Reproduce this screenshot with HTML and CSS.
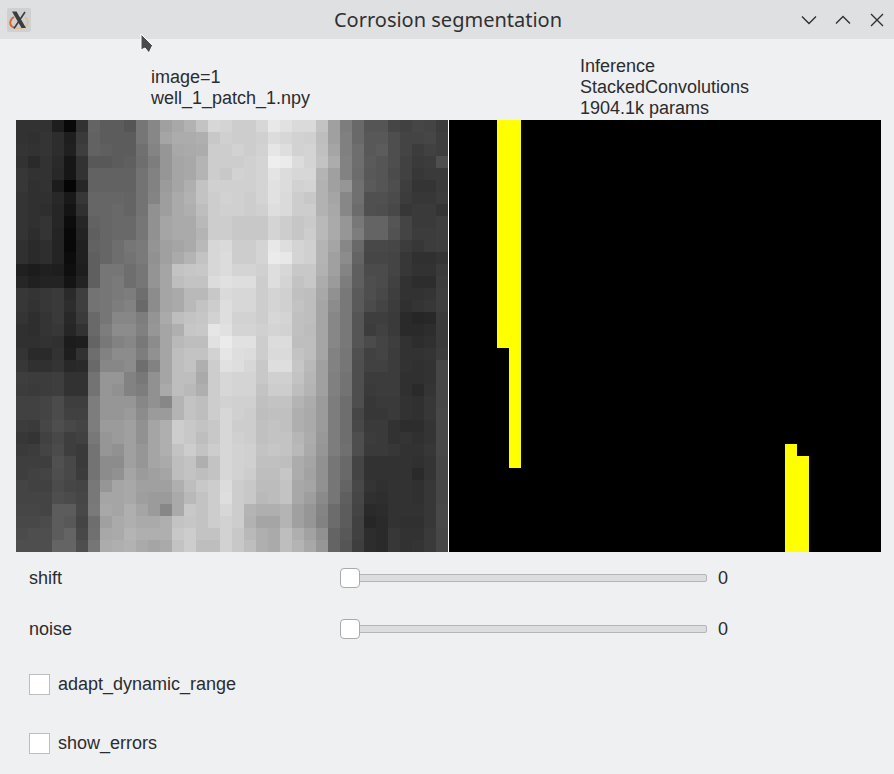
FILE: index.html
```html
<!DOCTYPE html>
<html lang="en">
<head>
    <meta charset="UTF-8">
    <meta name="viewport" content="width=device-width, initial-scale=1.0">
    <title>Corrosion segmentation</title>
    <link rel="stylesheet" href="styles.css">
</head>
<body>
    <div class="window">
        <div class="titlebar">
            <svg class="app-icon" viewBox="0 0 24 24" width="24" height="24">
                <rect width="24" height="24" rx="2" fill="#cfd0d2"/>
                <path d="M7 9 C2 12 2 18 7 19.5" fill="none" stroke="#e0662a" stroke-width="2"/>
                <path d="M18 9 C22 12 22 17 17 19.5 C14 20.5 11 20.5 9 20" fill="none" stroke="#e8b98a" stroke-width="1.3"/>
                <path d="M5 3.5 H9.5 L19 20 H14.5 Z" fill="#3c3c3e"/>
                <path d="M18 4 L7 20.5" fill="none" stroke="#3c3c3e" stroke-width="1.6"/>
            </svg>
            <div class="title">Corrosion segmentation</div>
            <div class="window-buttons">
                <svg viewBox="0 0 16 10" width="16" height="10"><path d="M1 1.5 L8 8.5 L15 1.5" class="glyph"/></svg>
                <svg viewBox="0 0 16 10" width="16" height="10"><path d="M1 8.5 L8 1.5 L15 8.5" class="glyph"/></svg>
                <svg class="close" viewBox="0 0 14 14" width="14" height="14"><path d="M1 1 L13 13 M13 1 L1 13" class="glyph"/></svg>
            </div>
        </div>

        <div class="content">
            <div class="captions">
                <div class="caption caption-left">image=1<br>well_1_patch_1.npy</div>
                <div class="caption caption-right">Inference<br>StackedConvolutions<br>1904.1k params</div>
            </div>
            <div class="plots">
                <canvas id="inputImage" class="plot" width="36" height="36"></canvas>
                <canvas id="inference" class="plot" width="36" height="36"></canvas>
            </div>
            <div class="controls">
                <div class="control">
                    <span class="control-label">shift</span>
                    <div class="slider"><div class="track"></div><div class="thumb"></div></div>
                    <span class="control-value">0</span>
                </div>
                <div class="control">
                    <span class="control-label">noise</span>
                    <div class="slider"><div class="track"></div><div class="thumb"></div></div>
                    <span class="control-value">0</span>
                </div>
                <label class="check">
                    <span class="box"></span>
                    adapt_dynamic_range
                </label>
                <label class="check">
                    <span class="box"></span>
                    show_errors
                </label>
            </div>
        </div>

        <svg class="pointer" viewBox="0 0 14 21" width="14" height="21">
            <path d="M1 1 V17 L5 15 L9 20 L12.5 12.5 Z" fill="#4a4b4d" stroke="#ffffff" stroke-width="1"/>
        </svg>
    </div>
    <script src="app.js"></script>
</body>
</html>
```

FILE: styles.css
```css
* {
    box-sizing: border-box;
}
html, body {
    margin: 0;
    padding: 0;
}
body {
    font-family: "Liberation Sans", Arial, sans-serif;
    font-size: 18px;
    color: #2b2c2e;
    background-color: #eff0f2;
}
.window {
    position: relative;
    width: 894px;
    height: 774px;
    overflow: hidden;
}
.titlebar {
    display: flex;
    align-items: center;
    height: 39px;
    padding: 0 10px 0 7px;
    background-color: #dfe0e2;
}
.app-icon {
    flex: none;
}
.title {
    flex: 1;
    padding-left: 64px;
    text-align: center;
    font-family: "Noto Sans", sans-serif;
    font-size: 20px;
    color: #2f3032;
}
.window-buttons {
    display: flex;
    align-items: center;
    gap: 18px;
}
.close {
    margin-left: 1px;
}
.glyph {
    fill: none;
    stroke: #2f3032;
    stroke-width: 1.4;
}
.content {
    padding: 0 13px 0 16px;
}
.captions {
    display: grid;
    grid-template-columns: 433px 432px;
    height: 81px;
}
.caption {
    align-self: end;
    padding-bottom: 1px;
    line-height: 21px;
}
.caption-left {
    padding-left: 135px;
    padding-bottom: 11px;
}
.caption-right {
    padding-left: 131px;
}
.plots {
    display: flex;
    gap: 1px;
    background-color: #ffffff;
    width: 865px;
}
.plot {
    display: block;
    width: 432px;
    height: 432px;
    image-rendering: pixelated;
}
.controls {
    display: grid;
    grid-template-rows: 52px 50px 60px 58px;
    padding-left: 13px;
}
.control {
    display: flex;
    align-items: center;
}
.control-label {
    width: 311px;
}
.slider {
    position: relative;
    width: 367px;
    height: 20px;
}
.track {
    position: absolute;
    left: 9px;
    right: 0;
    top: 6px;
    height: 8px;
    background-color: #dcdddf;
    border: 1px solid #b4b5b7;
    border-radius: 2px;
}
.thumb {
    position: absolute;
    left: 0;
    top: 0;
    width: 20px;
    height: 20px;
    background-color: #ffffff;
    border: 1px solid #a9aaac;
    border-radius: 4px;
}
.control-value {
    margin-left: 11px;
}
.check {
    display: flex;
    align-items: center;
    gap: 8px;
}
.box {
    width: 21px;
    height: 21px;
    background-color: #ffffff;
    border: 1px solid #bdbec0;
}
.pointer {
    position: absolute;
    left: 140px;
    top: 33px;
}
```

FILE: app.js
```js
// grey levels of the input patch, 36 x 36
const patch = [
    [50,50,50,30,8,50,100,92,92,85,118,135,160,168,178,195,215,212,205,205,215,232,225,218,218,195,160,125,105,85,85,70,65,70,68,60],
    [50,48,52,45,30,58,98,92,92,92,118,135,165,172,172,175,200,208,205,205,208,220,215,210,208,190,160,128,105,88,88,78,68,68,70,62],
    [52,50,52,45,32,62,98,95,92,92,112,132,150,168,170,172,205,205,210,205,210,230,222,210,212,192,165,128,110,88,92,78,68,60,65,62],
    [50,42,50,42,22,50,88,88,92,95,110,125,150,165,168,180,205,205,205,208,212,238,235,220,212,195,172,130,110,90,85,78,65,58,60,78],
    [55,50,50,40,22,50,98,98,98,98,115,130,150,165,168,180,205,200,210,208,212,228,220,215,215,180,160,130,108,88,85,75,65,55,58,58],
    [55,48,50,28,5,38,98,98,98,98,115,130,155,165,175,195,208,208,208,208,212,225,220,210,212,178,160,150,112,90,85,78,62,52,52,58],
    [52,48,48,40,25,55,102,102,102,100,115,132,158,170,178,195,205,210,208,205,212,225,218,205,200,178,165,135,112,80,80,75,60,55,55,60],
    [52,48,46,38,20,48,102,102,105,100,115,145,158,170,175,190,205,208,208,205,208,222,218,205,205,178,168,135,108,80,78,72,55,58,58,52],
    [52,48,52,38,12,38,98,102,105,105,118,145,165,170,170,185,205,205,200,200,200,212,205,198,202,185,170,150,120,100,100,85,68,58,58,62],
    [52,45,52,36,8,35,95,102,105,105,118,145,165,170,170,180,205,205,200,200,200,212,205,198,205,185,170,150,125,100,100,82,68,60,60,62],
    [48,42,46,36,8,32,98,102,110,118,122,148,160,165,170,185,215,218,205,205,212,232,222,212,208,180,165,135,105,72,72,70,60,55,60,62],
    [48,42,46,36,12,32,95,102,110,115,122,145,160,170,180,195,215,220,205,205,212,235,232,212,208,180,160,140,100,70,70,68,55,48,48,52],
    [32,28,32,30,15,30,95,118,118,110,118,148,165,195,198,200,215,220,212,212,208,222,215,200,200,178,160,132,95,75,75,68,55,50,50,58],
    [38,32,35,35,20,35,95,118,122,110,118,148,165,190,195,195,220,225,222,222,205,222,212,195,200,172,155,125,95,78,75,65,50,45,45,60],
    [55,52,55,58,42,62,115,118,122,125,110,140,165,170,185,185,200,218,215,215,205,212,208,192,190,168,145,120,90,78,72,62,50,50,52,62],
    [55,50,55,58,45,62,115,118,125,130,105,140,165,170,185,195,205,222,215,215,205,212,208,195,190,165,140,120,90,75,68,60,48,52,55,62],
    [52,46,52,58,40,58,105,118,135,135,125,148,170,190,195,198,210,222,210,210,205,215,212,192,190,165,135,120,85,62,62,58,42,38,40,58],
    [48,46,52,55,38,50,105,125,140,140,128,150,165,175,198,200,230,225,212,212,208,212,210,192,188,165,135,120,85,60,65,58,42,42,45,58],
    [48,48,50,48,28,30,100,120,130,135,120,140,165,185,190,190,225,235,225,225,205,220,220,190,190,165,135,120,85,75,68,62,50,45,48,58],
    [52,42,42,50,30,50,110,130,140,140,125,145,165,190,195,195,210,230,222,220,205,218,218,195,190,165,130,118,80,65,68,60,50,50,52,60],
    [55,48,48,52,40,42,105,135,135,140,110,130,165,190,195,175,205,225,222,215,200,222,222,198,185,160,130,118,78,65,65,60,50,48,50,70],
    [62,60,60,62,50,50,115,150,150,130,120,145,165,190,190,170,205,215,212,212,200,208,208,195,182,160,128,115,78,60,60,60,48,48,50,70],
    [60,58,60,62,50,50,115,150,145,130,125,145,170,190,185,175,205,215,212,212,195,205,205,190,180,160,128,115,78,58,60,60,48,42,52,70],
    [65,65,68,75,62,62,125,150,150,150,135,145,135,180,195,190,205,210,208,208,192,195,195,180,172,155,125,110,78,55,58,58,50,48,55,70],
    [65,65,68,75,65,65,125,150,150,155,140,155,155,180,195,190,205,215,208,205,190,192,192,175,170,155,125,110,70,55,55,58,50,48,55,72],
    [60,58,70,78,72,68,125,155,155,160,145,165,175,205,200,195,200,215,205,205,192,195,192,175,170,155,125,110,72,58,58,50,45,45,52,72],
    [55,52,65,72,62,65,120,150,155,160,145,165,175,205,200,190,200,215,208,205,192,195,195,182,172,152,125,110,78,60,58,50,52,48,52,72],
    [58,60,68,75,62,58,115,150,145,160,150,165,175,195,205,195,205,215,210,208,195,198,195,185,170,150,125,112,78,58,58,55,50,50,55,72],
    [62,62,62,80,72,58,115,140,140,160,150,165,170,190,195,175,195,215,210,208,192,192,190,172,165,145,118,105,68,50,50,50,50,48,52,70],
    [62,65,68,78,72,60,115,140,145,165,155,160,165,190,195,190,195,215,210,205,190,190,198,172,162,145,118,105,68,50,50,50,50,42,52,70],
    [68,65,65,75,70,68,120,150,165,168,160,160,160,175,190,200,205,220,205,200,188,188,195,168,165,145,118,100,72,52,48,50,50,48,55,70],
    [68,68,68,78,75,70,120,165,165,168,158,155,155,170,185,195,205,222,205,200,185,188,195,168,158,138,118,95,70,48,46,50,50,48,55,70],
    [70,70,68,92,92,72,122,168,165,175,165,155,135,170,200,195,205,215,205,180,175,175,180,160,150,132,108,92,68,42,44,50,50,50,55,72],
    [72,72,75,92,88,68,110,160,170,175,170,170,175,195,198,195,205,210,205,178,165,165,180,160,150,130,108,92,65,38,42,50,48,48,55,72],
    [75,78,78,92,100,72,112,168,170,180,175,175,175,200,205,195,195,210,200,185,175,170,190,175,162,145,100,88,65,45,42,55,50,50,58,70],
    [78,78,78,100,100,78,118,172,175,178,170,165,170,195,205,190,190,210,200,190,175,170,190,180,168,150,100,85,62,45,42,55,50,52,58,70]
];

// yellow blocks of the inference mask: [col, row, cols, rows]
const mask = [
    [4, 0, 2, 19],
    [5, 19, 1, 10],
    [28, 27, 1, 9],
    [29, 28, 1, 8]
];

const imageCtx = document.getElementById("inputImage").getContext("2d");
patch.forEach(function (row, y) {
    row.forEach(function (v, x) {
        imageCtx.fillStyle = "rgb(" + v + "," + v + "," + v + ")";
        imageCtx.fillRect(x, y, 1, 1);
    });
});

const maskCtx = document.getElementById("inference").getContext("2d");
maskCtx.fillStyle = "#000";
maskCtx.fillRect(0, 0, 36, 36);
maskCtx.fillStyle = "#ff0";
mask.forEach(function (b) {
    maskCtx.fillRect(b[0], b[1], b[2], b[3]);
});
```
